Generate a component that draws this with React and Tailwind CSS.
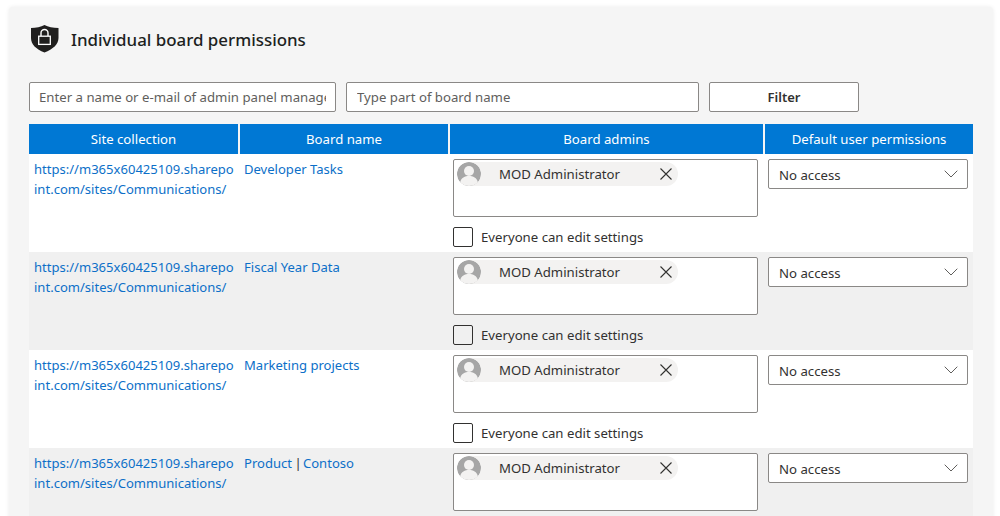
const rows = [
  { name: "Developer Tasks" },
  { name: "Fiscal Year Data" },
  { name: "Marketing projects" },
  { name: "Product | Contoso", split: true },
];

function ShieldLock() {
  return (
    <svg width="28" height="30" viewBox="0 0 28 30" className="shrink-0">
      <path d="M13.5 1 C17 3 22 4 27.5 4 V14 C27.5 20.5 22 25 13.5 28.5 C5 25 0 20.5 0 14 V4 C5 4 10 3 13.5 1 Z" fill="#201f1e" />
      <path d="M10 12 V9 a3.5 3.5 0 0 1 7 0 V12" fill="none" stroke="#fff" strokeWidth="1.4" />
      <rect x="7.7" y="12.2" width="11.6" height="8.2" fill="#201f1e" stroke="#fff" strokeWidth="1.3" />
    </svg>
  );
}

function Avatar() {
  return (
    <svg width="24" height="24" viewBox="0 0 24 24" className="shrink-0 rounded-full">
      <circle cx="12" cy="12" r="12" fill="#a6a6a6" />
      <circle cx="12" cy="9" r="5" fill="#f3f2f1" />
      <path d="M3 21 C4 15.5 8 14 12 14 C16 14 20 15.5 21 21 C18.5 23 15.5 24 12 24 C8.5 24 5.5 23 3 21 Z" fill="#f3f2f1" />
    </svg>
  );
}

function Row({ row, shaded }) {
  return (
    <div className={`grid grid-cols-[209px_208px_313px_208px] gap-x-[2px] h-[98px] ${shaded ? "bg-[#f0f0f0]" : "bg-white"}`}>
      <div className="pl-[5px] pr-[3px] pt-[5px] text-[13.05px] text-[#0c6fc8] leading-[20px] break-all">
        https://m365x60425109.sharepoint.com/sites/Communications/
      </div>
      <div className="pl-[4px] pt-[5px] text-[13.05px] text-[#0c6fc8] leading-[20px]">
        {row.split ? (
          <>
            Product <span className="text-[#323130] -ml-[1px] -mr-[2px]">|</span> Contoso
          </>
        ) : (
          row.name
        )}
      </div>
      <div className="pl-[3px] pt-[5px]">
        <div className="w-[305px] h-[58px] bg-white border border-[#8a8886] rounded-[2px] pl-[3px] pt-[2px]">
          <div className="w-[221px] h-[24px] bg-[#f3f2f1] rounded-full flex items-center text-[#323130]">
            <Avatar />
            <span className="ml-[18px] flex-1 pt-[2px]">MOD Administrator</span>
            <svg width="12" height="12" viewBox="0 0 12 12" className="mr-[6px]">
              <path d="M0.5 0.5 L11.5 11.5 M11.5 0.5 L0.5 11.5" stroke="#323130" strokeWidth="1.1" fill="none" />
            </svg>
          </div>
        </div>
        <div className="flex items-center mt-[10px] text-[#323130]">
          <span className="w-[20px] h-[20px] bg-transparent border border-[#323130] rounded-[2px]" />
          <span className="ml-[8px] pt-[1px]">Everyone can edit settings</span>
        </div>
      </div>
      <div className="pl-[3px] pt-[5px]">
        <div className="w-[200px] h-[30px] bg-white border border-[#8a8886] rounded-[2px] flex items-center justify-between pl-[10px] pr-[9px] text-[#323130]">
          <span className="pt-[4px]">No access</span>
          <svg width="14" height="8" viewBox="0 0 14 8">
            <path d="M0.7 0.7 L7 7 L13.3 0.7" stroke="#605e5c" strokeWidth="1" fill="none" />
          </svg>
        </div>
      </div>
    </div>
  );
}

export default function App() {
  return (
    <div className="h-[516px] overflow-hidden bg-white pt-[7px] pl-[9px] pr-[7px] text-[13.2px] font-['Noto_Sans',sans-serif]">
      <div className="h-[600px] bg-[#f5f5f5] rounded-t-[4px] shadow-[0_0_4px_rgba(0,0,0,0.08)] pt-[17px] pl-[20px] pr-[20px]">
        <div className="flex items-center h-[30px] pl-[2px]">
          <ShieldLock />
          <h2 className="ml-[12px] pt-[1px] text-[16.9px] font-medium text-[#201f1e]">Individual board permissions</h2>
        </div>

        <div className="flex mt-[28px] gap-x-[10px]">
          <input
            readOnly
            placeholder="Enter a name or e-mail of admin panel manager"
            className="w-[307px] h-[30px] bg-white border border-[#8a8886] rounded-[2px] pl-[9px] pr-[9px] placeholder:text-[#605e5c] outline-none"
          />
          <input
            readOnly
            placeholder="Type part of board name"
            className="w-[353px] h-[30px] bg-white border border-[#8a8886] rounded-[2px] px-[10px] placeholder:text-[#605e5c] outline-none"
          />
          <button className="w-[150px] h-[30px] bg-white border border-[#8a8886] rounded-[2px] pt-[1px] font-semibold text-[#323130] text-[13px]">
            Filter
          </button>
        </div>

        <div className="mt-[12px]">
          <div className="grid grid-cols-[209px_208px_313px_208px] gap-x-[2px] h-[30px] text-white">
            {["Site collection", "Board name", "Board admins", "Default user permissions"].map((h) => (
              <div key={h} className="bg-[#0078d4] flex items-center justify-center pt-[2px]">
                {h}
              </div>
            ))}
          </div>
          {rows.map((row, i) => (
            <Row key={row.name} row={row} shaded={i % 2 === 1} />
          ))}
        </div>
      </div>
    </div>
  );
}
